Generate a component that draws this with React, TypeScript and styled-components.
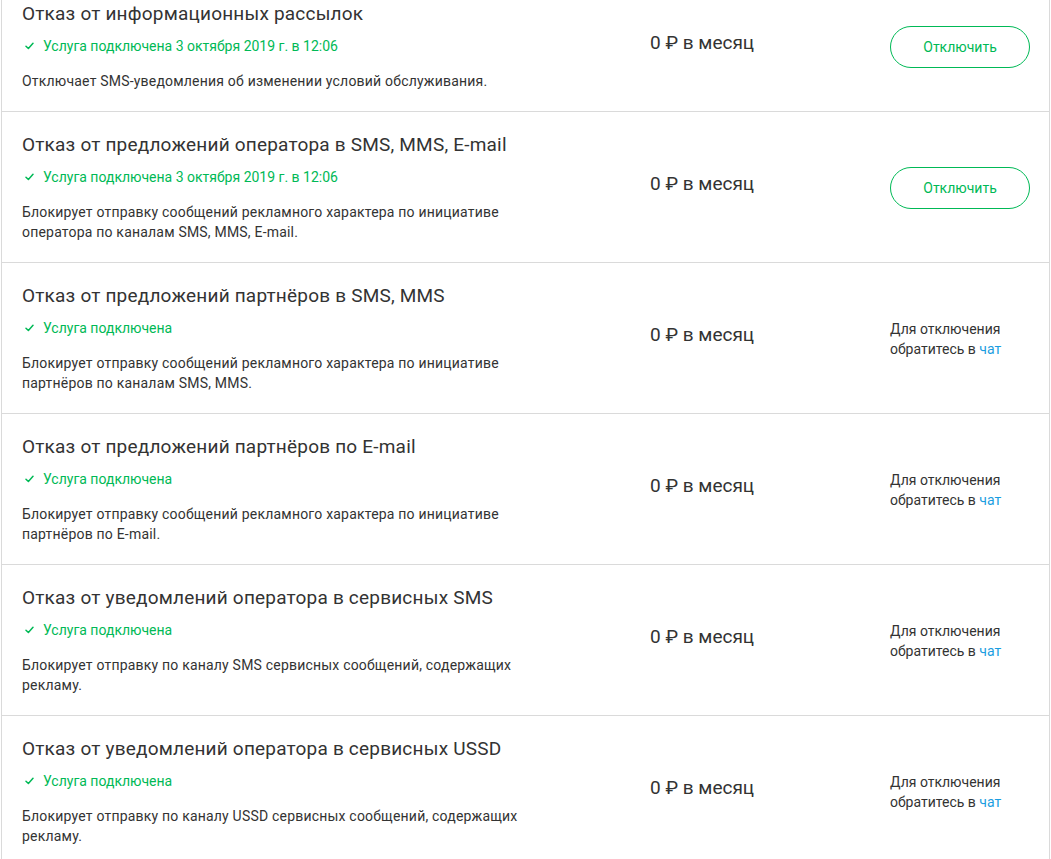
import { ReactElement } from 'react';
import styled, { createGlobalStyle } from 'styled-components';

const Colors = {
    text: '#333333',
    green: '#00b956',
    border: '#dadada',
    link: '#1a9de0',
    white: '#ffffff',
};

const GlobalStyle = createGlobalStyle`
    html, body {
        margin: 0;
        padding: 0;
        background: ${Colors.white};
        overflow: hidden;
    }
    body {
        font-family: Roboto, "Noto Sans", "Liberation Sans", sans-serif;
        color: ${Colors.text};
    }
`;

const ServiceList = styled.div`
    box-sizing: border-box;
    width: 1049px;
    margin-left: 1px;
    margin-top: -20px;
    border-left: solid 1px ${Colors.border};
    border-right: solid 1px ${Colors.border};
`;

const Row = styled.div`
    display: grid;
    grid-template-columns: 1fr 240px 140px;
    align-items: center;
    padding: 21px 19px 20px 20px;
    border-top: solid 1px ${Colors.border};
`;

const InfoColumn = styled.div`
    display: flex;
    flex-direction: column;
`;

const Title = styled.div`
    font-size: 19px;
    line-height: 24px;
    font-weight: 400;
    letter-spacing: 0.2px;
    color: ${Colors.text};
`;

const Status = styled.div`
    display: flex;
    align-items: center;
    gap: 9px;
    margin-top: 11px;
    padding-left: 3px;
    font-size: 14px;
    line-height: 18px;
    color: ${Colors.green};
`;

const Description = styled.div`
    max-width: 505px;
    margin-top: 16px;
    font-size: 14px;
    line-height: 20px;
    letter-spacing: 0.2px;
    color: ${Colors.text};
`;

const Price = styled.div`
    font-size: 19px;
    line-height: 24px;
    padding-bottom: 7px;
    color: ${Colors.text};
`;

const DisableButton = styled.button`
    box-sizing: border-box;
    width: 140px;
    height: 42px;
    border: solid 1px ${Colors.green};
    border-radius: 21px;
    background: ${Colors.white};
    color: ${Colors.green};
    font-family: inherit;
    font-size: 14px;
    cursor: pointer;
`;

const ChatNote = styled.div`
    font-size: 14px;
    line-height: 20px;
    color: ${Colors.text};
    white-space: nowrap;
    a {
        color: ${Colors.link};
        text-decoration: none;
    }
`;

const CheckIcon = (): ReactElement => (
    <svg width='9' height='8' viewBox='0 0 9 8' fill='none'>
        <path
            d='M1 4.2 L3.4 6.5 L8 1.3'
            stroke={Colors.green}
            strokeWidth='1.5'
            strokeLinecap='round'
            strokeLinejoin='round'
        />
    </svg>
);

type Service = {
    title: string;
    status: string;
    description: string;
    canDisable: boolean;
};

const services: Service[] = [
    {
        title: 'Отказ от информационных рассылок',
        status: 'Услуга подключена 3 октября 2019 г. в 12:06',
        description: 'Отключает SMS-уведомления об изменении условий обслуживания.',
        canDisable: true,
    },
    {
        title: 'Отказ от предложений оператора в SMS, MMS, E-mail',
        status: 'Услуга подключена 3 октября 2019 г. в 12:06',
        description:
            'Блокирует отправку сообщений рекламного характера по инициативе оператора по каналам SMS, MMS, E-mail.',
        canDisable: true,
    },
    {
        title: 'Отказ от предложений партнёров в SMS, MMS',
        status: 'Услуга подключена',
        description:
            'Блокирует отправку сообщений рекламного характера по инициативе партнёров по каналам SMS, MMS.',
        canDisable: false,
    },
    {
        title: 'Отказ от предложений партнёров по E-mail',
        status: 'Услуга подключена',
        description:
            'Блокирует отправку сообщений рекламного характера по инициативе партнёров по E-mail.',
        canDisable: false,
    },
    {
        title: 'Отказ от уведомлений оператора в сервисных SMS',
        status: 'Услуга подключена',
        description:
            'Блокирует отправку по каналу SMS сервисных сообщений, содержащих рекламу.',
        canDisable: false,
    },
    {
        title: 'Отказ от уведомлений оператора в сервисных USSD',
        status: 'Услуга подключена',
        description:
            'Блокирует отправку по каналу USSD сервисных сообщений, содержащих рекламу.',
        canDisable: false,
    },
];

const ServiceRow = ({ service }: { service: Service }): ReactElement => (
    <Row>
        <InfoColumn>
            <Title>{service.title}</Title>
            <Status>
                <CheckIcon />
                {service.status}
            </Status>
            <Description>{service.description}</Description>
        </InfoColumn>
        <Price>0 ₽ в месяц</Price>
        {service.canDisable ? (
            <DisableButton>Отключить</DisableButton>
        ) : (
            <ChatNote>
                Для отключения
                <br />
                обратитесь в <a href='#chat'>чат</a>
            </ChatNote>
        )}
    </Row>
);

export default function App(): ReactElement {
    return (
        <>
            <GlobalStyle />
            <ServiceList>
                {services.map((s) => (
                    <ServiceRow key={s.title} service={s} />
                ))}
            </ServiceList>
        </>
    );
}
